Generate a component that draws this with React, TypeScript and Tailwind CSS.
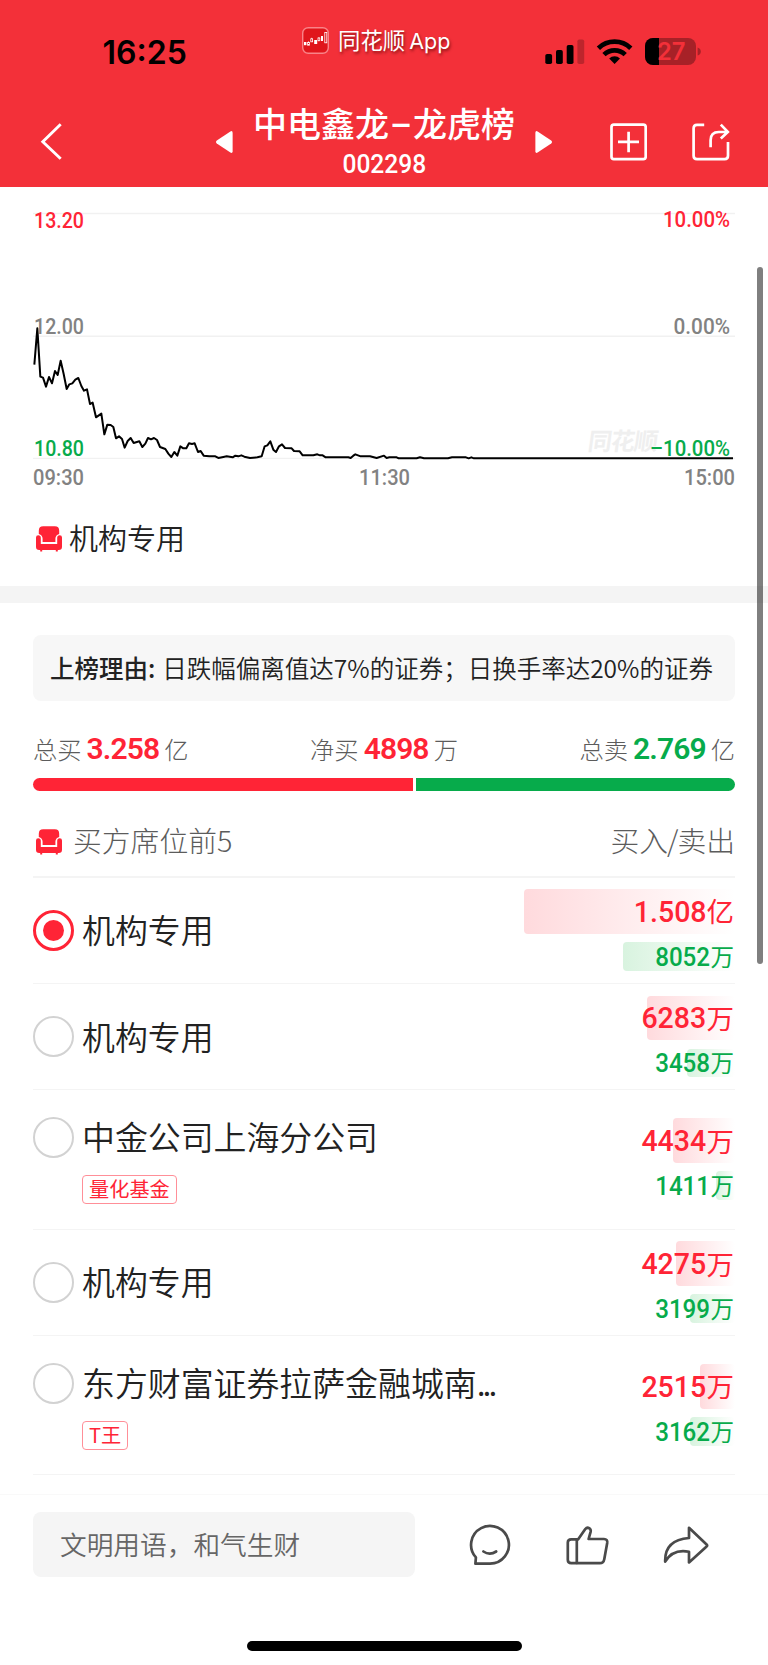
import React from 'react';

const PRICE_LINE =
  '43,524 52,415 61,560 69,563 78,590 87,561 96,580 105,543 113,555 122,512 131,552 140,597 148,583 157,580 166,569 175,564 184,588 192,602 201,598 210,642 218,638 228,682 244,671 253,733 262,704 272,705 280,711 288,745 297,739 306,747 314,773 323,753 332,744 341,759 358,754 367,771 376,761 384,744 393,748 402,744 411,750 420,771 436,777 445,791 454,801 463,786 472,797 481,769 490,775 499,775 507,760 516,762 524,760 534,786 542,783 551,797 568,799 586,799 595,804 610,801 620,799 638,802 646,797 655,799 664,796 673,800 690,804 712,802 725,799 734,769 742,766 751,754 760,779 768,786 777,769 786,763 795,774 815,775 822,783 839,784 848,796 880,796 892,793 900,796 908,796 917,802 985,802 992,804 1000,797 1006,793 1022,799 1050,799 1070,804 1092,797 1100,804 1108,802 1130,802 1136,805 1190,805 1200,802 1212,805 1284,805 1296,802 1338,802 1346,805 1354,802 1362,805 2139,805';

type Seat = {
  name: string;
  truncated?: boolean;
  tag?: string;
  checked?: boolean;
  buy: string;
  sell: string;
  buyUnit: string;
  buyBar: number;
  sellBar: number;
  height: string;
};

const SEATS: Seat[] = [
  { name: '机构专用', checked: true, buy: '1.508', buyUnit: '亿', sell: '8052', buyBar: 211, sellBar: 112.5, height: 'h-[106.5px]' },
  { name: '机构专用', buy: '6283', buyUnit: '万', sell: '3458', buyBar: 88, sellBar: 48, height: 'h-[106.3px]' },
  { name: '中金公司上海分公司', tag: '量化基金', buy: '4434', buyUnit: '万', sell: '1411', buyBar: 62, sellBar: 19, height: 'h-[139.5px]' },
  { name: '机构专用', buy: '4275', buyUnit: '万', sell: '3199', buyBar: 59.5, sellBar: 45, height: 'h-[106.3px]' },
  { name: '东方财富证券拉萨金融城南', truncated: true, tag: 'T王', buy: '2515', buyUnit: '万', sell: '3162', buyBar: 35, sellBar: 45, height: 'h-[139.2px]' },
];

function Armchair() {
  return (
    <svg className="block h-[26px] w-[26px] shrink-0" viewBox="0 0 26 26" fill="#ff2436">
      <path d="M7.2 0.3h11.6q4.4 0 4.4 4.4v3.2q-3.8 1-3.8 4.9v3.1H6.6v-3.1q0-3.9-3.8-4.9V4.7q0-4.4 4.4-4.4z" />
      <path d="M0 11.6q0-2.4 2.3-2.4 2.5 0 2.5 2.5v6.2h16.4v-6.2q0-2.5 2.5-2.5 2.3 0 2.3 2.4v9.2q0 3.2-3.2 3.2h-1v1.4h-2V24H6.2v1.4h-2V24h-1Q0 24 0 20.8z" />
    </svg>
  );
}

function Header() {
  return (
    <header className="flex h-[187px] flex-col bg-[#f33039]">
      <div className="flex h-[92px] items-start">
        <div className="w-[302px] pt-[33px] pl-[102.5px] font-['Inter'] text-[32px] leading-[40px] font-semibold text-black">16:25</div>
        <div className="flex w-[243px] items-start gap-[9px] pt-[23px]">
          <svg className="mt-[4px] h-[27px] w-[27px]" viewBox="0 0 27 27">
            <rect x="0.7" y="0.7" width="25.6" height="25.6" rx="5.5" fill="#e0161c" stroke="#f98388" strokeWidth="1.4" />
            <g fill="#fff">
              <rect x="2" y="15" width="2.4" height="3.2" />
              <rect x="12.2" y="13" width="3" height="4" />
              <rect x="19" y="9" width="2" height="5" />
            </g>
            <g fill="none" stroke="#fff" strokeWidth="0.8">
              <rect x="5.6" y="15.4" width="1.8" height="2.8" />
              <rect x="8.8" y="11.8" width="1.8" height="3" />
              <rect x="16" y="11" width="1.8" height="2.4" />
              <path d="M6.5 14.4v1M9.7 10.8v1M16.9 10.2v.8M16.9 13.4v1" />
              <rect x="22.8" y="5.4" width="2" height="10.4" />
            </g>
          </svg>
          <span className="text-[22.4px] leading-[33px] font-normal whitespace-nowrap text-white [text-shadow:1px_2px_3px_rgba(80,0,0,0.65)]">
            同花顺<span className="ml-[4px] font-['Inter'] text-[21.5px]">App</span>
          </span>
        </div>
        <div className="flex items-start pt-[38px]">
          <svg className="block h-[27px] w-[156px]" viewBox="0 0 156 27">
            <rect x="0.3" y="16" width="6.8" height="10" rx="1.8" />
            <rect x="11" y="12" width="6.8" height="14" rx="1.8" />
            <rect x="21.7" y="7" width="6.8" height="19" rx="1.8" />
            <rect x="32.4" y="1.5" width="6.8" height="24.5" rx="1.8" fillOpacity="0.22" />
            <g fill="none" stroke="#000" strokeWidth="4.7">
              <path d="M53.4 10.2a23.3 23.3 0 0 1 32.4 0" />
              <path d="M59 16.6a15.2 15.2 0 0 1 21.2 0" />
            </g>
            <path d="M69.6 26l-5.4-5.6a7.8 7.8 0 0 1 10.8 0z" />
            <rect x="100" y="0" width="51" height="27" rx="8" fill="#a72127" />
            <path d="M108 0h6v27h-6a8 8 0 0 1-8-8V8a8 8 0 0 1 8-8z" />
            <path d="M152.6 9.4q3.2 1 3.2 4.1t-3.2 4.1z" fill="#a72127" />
            <text x="112" y="22" textLength="28.5" lengthAdjust="spacingAndGlyphs" fill="#f33039" className="font-['Inter'] text-[24px] font-semibold">27</text>
          </svg>
        </div>
      </div>
      <div className="flex h-[95px] items-start">
        <svg className="mt-[30px] ml-[40px] block h-[40px] w-[24px]" viewBox="0 0 24 40" fill="none" stroke="#fff" strokeWidth="2.9">
          <path d="M20.7 2.3L2.8 19.8l17.9 17" />
        </svg>
        <svg className="mt-[38.5px] ml-[152px] block h-[22px] w-[17px]" viewBox="0 0 17 22" fill="#fff">
          <path d="M0.8 9.6q-1.6 1.4 0 2.8L14.4 21.6q2.2 1 2.2-1.4V1.8q0-2.4-2.2-1.4z" />
        </svg>
        <div className="flex w-[302px] flex-col items-center pt-[9px] text-white">
          <h1 className="text-[34px] leading-[44px] font-medium whitespace-nowrap">
            中电鑫龙<span className="mx-[1px] font-['Roboto']">–</span>龙虎榜
          </h1>
          <span className="mt-[1px] inline-block scale-x-[0.945] font-['Roboto'] text-[26px] leading-[32px] font-medium">002298</span>
        </div>
        <svg className="mt-[38.5px] block h-[22px] w-[17px] -scale-x-100" viewBox="0 0 17 22" fill="#fff">
          <path d="M0.8 9.6q-1.6 1.4 0 2.8L14.4 21.6q2.2 1 2.2-1.4V1.8q0-2.4-2.2-1.4z" />
        </svg>
        <svg className="mt-[30.5px] ml-[58px] block h-[38px] w-[37px]" viewBox="0 0 37 38" fill="none" stroke="#fff" strokeWidth="2.7">
          <rect x="1.5" y="1.7" width="34.2" height="34.4" rx="2.4" />
          <path d="M8 18.9h21M18.6 8.8v20.4" />
        </svg>
        <svg className="mt-[30.5px] ml-[44.5px] block h-[38px] w-[38px]" viewBox="0 0 38 38" fill="none" stroke="#fff" strokeWidth="2.7">
          <path d="M12.2 1.8H5q-3.4 0-3.4 3.4v27.5q0 3.4 3.4 3.4h27.6q3.4 0 3.4-3.4V19" />
          <path d="M18.6 24.2v-7q0-8.2 8.2-8.2h8.4M28.8 1.6l7 7.3-7 6.6" />
        </svg>
      </div>
    </header>
  );
}

function PriceChart() {
  const label = "font-['Roboto'] text-[22px] font-medium";
  return (
    <svg className="block h-[310px] w-[768px]" viewBox="0 187 768 310">
      <path d="M33 213.5H735M33 336.2H735M33 458.4H735" stroke="#f1f1f1" strokeWidth="1.4" />
      <text transform="translate(587 450) skewX(-8)" textLength="70" fill="#efefef" className="text-[24px] font-bold">同花顺</text>
      <text x="34" y="227.5" textLength="50" lengthAdjust="spacingAndGlyphs" fill="#ff2436" className={label}>13.20</text>
      <text x="34" y="333.5" textLength="50" lengthAdjust="spacingAndGlyphs" fill="#828282" className={label}>12.00</text>
      <text x="34" y="455.5" textLength="50" lengthAdjust="spacingAndGlyphs" fill="#07ab4b" className={label}>10.80</text>
      <text x="663" y="227" textLength="67" lengthAdjust="spacingAndGlyphs" fill="#ff2436" className={label}>10.00%</text>
      <text x="673.5" y="333.5" textLength="56.5" lengthAdjust="spacingAndGlyphs" fill="#828282" className={label}>0.00%</text>
      <text x="650" y="456" textLength="80" lengthAdjust="spacingAndGlyphs" fill="#07ab4b" className={label}>–10.00%</text>
      <polyline transform="translate(20 190) scale(0.33333)" points={PRICE_LINE} fill="none" stroke="#000" strokeWidth="6" strokeLinejoin="round" />
      <text x="33" y="485" textLength="51" lengthAdjust="spacingAndGlyphs" fill="#828282" className={label}>09:30</text>
      <text x="359" y="485" textLength="51" lengthAdjust="spacingAndGlyphs" fill="#828282" className={label}>11:30</text>
      <text x="684" y="485" textLength="51" lengthAdjust="spacingAndGlyphs" fill="#828282" className={label}>15:00</text>
    </svg>
  );
}

function Total({ label, value, unit, color }: { label: string; value: string; unit: string; color: string }) {
  return (
    <div className="flex items-center gap-[5px] text-[24.3px] leading-[32px] font-light whitespace-nowrap text-[#5c5c5c]">
      <span>{label}</span>
      <span className={`-mt-px font-['Roboto'] text-[30px] font-semibold tracking-[-0.9px] ${color}`}>{value}</span>
      <span>{unit}</span>
    </div>
  );
}

function SeatRow({ seat }: { seat: Seat }) {
  return (
    <li className={`flex shrink-0 justify-between border-b-[1.5px] border-[#f4f4f4] ${seat.height}`}>
      <div className={seat.tag ? 'pt-[26.5px]' : 'pt-[32px]'}>
        <div className="flex h-[41px] items-center gap-[8px]">
          <span
            className={`flex h-[41px] w-[41px] items-center justify-center rounded-full ${
              seat.checked ? 'border-[3px] border-[#ff2436]' : 'border-[2.5px] border-[#d2d2d2]'
            }`}
          >
            {seat.checked && <span className="h-[21px] w-[21px] rounded-full bg-[#ff2436]" />}
          </span>
          <span className="-mt-[3px] text-[32.9px] leading-[41px] font-[350] whitespace-nowrap text-[#222]">
            {seat.name}
            {seat.truncated && <span className="tracking-[-3px]">...</span>}
          </span>
        </div>
        {seat.tag && (
          <span className="mt-[17.5px] ml-[49px] inline-flex h-[29px] items-center rounded-[4px] border border-[#ff8f98] px-[6px] text-[20.2px] leading-[26px] font-normal text-[#ff2436]">
            <span className="-mt-px">{seat.tag}</span>
          </span>
        )}
      </div>
      <div className={`flex flex-col items-end ${seat.tag ? 'pt-[28px]' : 'pt-[11.5px]'}`}>
        <div className="relative flex h-[44.5px] items-center justify-end text-[#ff2436]">
          <span
            className="absolute inset-y-0 right-0 rounded-[4px] bg-gradient-to-r from-[#ffdadd] to-white"
            style={{ width: seat.buyBar }}
          />
          <span className="relative mt-px origin-right scale-x-[0.95] font-['Roboto'] text-[30px] leading-[40px] font-medium">{seat.buy}</span>
          <span className="relative -mt-[2px] mr-[1px] text-[27.5px] leading-[40px] font-normal">{seat.buyUnit}</span>
        </div>
        <div className="relative mt-[8.5px] flex h-[28.5px] items-center justify-end text-[#07ab4b]">
          <span
            className="absolute inset-y-0 right-0 rounded-[4px] bg-gradient-to-r from-[#d8f3df] to-white"
            style={{ width: seat.sellBar }}
          />
          <span className="relative mt-px origin-right scale-x-[0.93] font-['Roboto'] text-[26px] leading-[28px] font-medium">{seat.sell}</span>
          <span className="relative -mt-px mr-[1px] text-[23.5px] leading-[28px] font-normal">万</span>
        </div>
      </div>
    </li>
  );
}

function Footer() {
  return (
    <footer className="flex h-[171px] flex-col items-center border-t border-[#f9f9f9] bg-white">
      <div className="flex w-full items-center pt-[17px] pl-[33px]">
        <div className="flex h-[65px] w-[382px] items-center rounded-[8px] bg-[#f5f5f5] pl-[27px] text-[26.7px] leading-[40px] font-[350] text-[#666]">
          <span className="-mt-[2px]">文明用语，和气生财</span>
        </div>
        <svg className="ml-[54px] block h-[42px] w-[42px]" viewBox="0 0 42 42" fill="none" stroke="#4a4a4a" strokeWidth="2.7" strokeLinejoin="round" strokeLinecap="round">
          <path d="M6.4 39.7H21A18.9 18.9 0 1 0 6.9 33.4z" />
          <path d="M14.4 27.5q6.3 4.3 12.8 0" />
        </svg>
        <svg className="ml-[55px] block h-[42px] w-[43px]" viewBox="0 0 43 42" fill="none" stroke="#4a4a4a" strokeWidth="2.7" strokeLinejoin="round" strokeLinecap="round">
          <path d="M12.2 15.3L19.3 5Q21 3 23.2 4.2q2 1.2 1.4 3.6l-2 7.2h15.4q3.8 0 3.2 4l-3 16.4q-.6 3.8-4.4 3.8H5.2q-3.4 0-3.4-3.4V18.6q0-3.3 3.4-3.3z" />
          <path d="M10.8 15.6v23.4" />
        </svg>
        <svg className="ml-[54px] block h-[42px] w-[46px]" viewBox="0 0 46 42" fill="none" stroke="#4a4a4a" strokeWidth="2.7" strokeLinejoin="round">
          <path d="M26 3.8l17.6 16.6q1 1 0 2L26 38.4V27.8Q10 24.6 2.2 37.6 1.4 16 26 14z" />
        </svg>
      </div>
      <div className="mt-[64px] h-[9.5px] w-[275px] rounded-full bg-black" />
    </footer>
  );
}

export default function App() {
  return (
    <div className="relative flex h-[1665px] w-[768px] flex-col overflow-hidden bg-white font-['Noto_Sans_CJK_SC',sans-serif]">
      <Header />
      <main className="flex h-[1307px] flex-col">
        <PriceChart />
        <div className="flex h-[89px] items-start gap-[7px] pl-[36px]">
          <div className="pt-[28.5px]"><Armchair /></div>
          <span className="pt-[19px] text-[29px] leading-[42px] font-[350] text-[#222]">机构专用</span>
        </div>
        <div className="h-[17px] shrink-0 bg-[#f4f4f4]" />
        <section className="flex flex-col px-[33px] pt-[32px]">
          <div className="flex h-[66px] items-center rounded-[8px] bg-[#f7f7f7] pl-[17px] text-[24.5px] leading-[36px] font-[350] whitespace-nowrap text-[#222]">
            <b className="mr-[8px] font-medium">
              上榜理由<span className="tracking-[-1px]">:</span>
            </b>
            日跌幅偏离值达7%的证券；日换手率达20%的证券
          </div>
          <div className="mt-[32px] flex h-[32px] items-center justify-between">
            <Total label="总买" value="3.258" unit="亿" color="text-[#ff2436]" />
            <Total label="净买" value="4898" unit="万" color="text-[#ff2436]" />
            <Total label="总卖" value="2.769" unit="亿" color="text-[#07ab4b]" />
          </div>
          <div className="mt-[13px] flex h-[13px] gap-[3.5px]">
            <div className="w-[379.5px] rounded-l-full bg-[#ff2436]" />
            <div className="flex-1 rounded-r-full bg-[#07ab4b]" />
          </div>
          <div className="flex h-[86.5px] items-start justify-between border-b-2 border-[#f4f4f4] text-[28.8px] leading-[42px] font-light text-[#5c5c5c]">
            <div className="flex items-start gap-[11px] pl-[3px]">
              <div className="pt-[38px]"><Armchair /></div>
              <span className="pt-[28px]">买方席位前5</span>
            </div>
            <span className="pt-[28px]">
              买入<span className="-mx-[1px]">/</span>卖出
            </span>
          </div>
          <ul className="flex flex-col">
            {SEATS.map((seat, i) => (
              <SeatRow key={i} seat={seat} />
            ))}
          </ul>
        </section>
      </main>
      <Footer />
      <div className="absolute top-[267px] left-[757px] h-[697px] w-[5.5px] rounded-full bg-black/50" />
    </div>
  );
}
